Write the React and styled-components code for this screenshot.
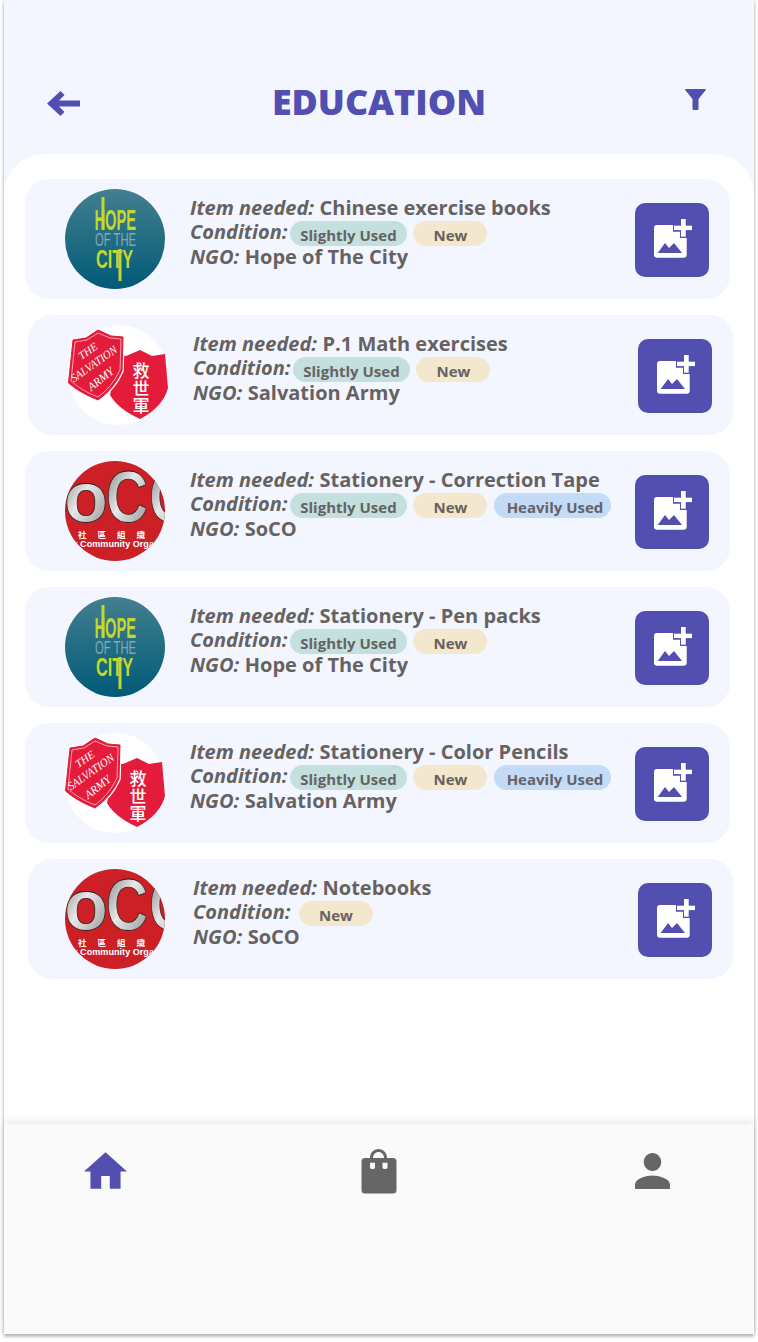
import React, { useId } from "react";
import styled, { createGlobalStyle } from "styled-components";

const Global = createGlobalStyle`
  html, body { margin: 0; padding: 0; background: #fff; }
  body { font-family: "Open Sans", "Liberation Sans", sans-serif; padding-bottom: 8px; }
`;

const Frame = styled.div`
  width: 750px;
  height: 1334px;
  margin-left: 4px;
  display: flex;
  flex-direction: column;
  background: #f3f6fe;
  box-shadow: 0 0 4px rgba(0, 0, 0, 0.22), 0 3px 3px rgba(0, 0, 0, 0.2);
`;

const Header = styled.header`
  height: 154px;
  flex: none;
  box-sizing: border-box;
  padding: 80px 43px 0 43px;
  display: grid;
  grid-template-columns: 1fr auto 1fr;
  align-items: start;
`;

const BackIcon = styled.svg`
  width: 33px;
  height: 25px;
  margin-top: 11px;
  color: #524fb0;
`;

const FilterIcon = styled.svg`
  width: 21px;
  height: 21px;
  margin: 9px 5px 0 0;
  justify-self: end;
  color: #524fb0;
`;

const Title = styled.h1`
  margin: -1px 0 0;
  font-size: 35.8px;
  line-height: 44px;
  font-weight: 800;
  color: #524fb0;
  letter-spacing: 0;
`;

const Sheet = styled.main`
  flex: 1;
  background: #fff;
  border-radius: 40px 40px 0 0;
  padding: 25px 21px 0;
  display: flex;
  flex-direction: column;
  gap: 16px;
`;

const Card = styled.article`
  width: 705px;
  height: 120px;
  flex: none;
  margin-left: ${(p) => (p.$shifted ? "3px" : "0")};
  box-sizing: border-box;
  padding: 10px 21px 10px 40px;
  display: flex;
  align-items: center;
  background: #f3f6fe;
  border-radius: 24px;
`;

const LogoSvg = styled.svg`
  width: 100px;
  height: 100px;
  flex: none;
  display: block;
`;

const LogoSlot = styled.div`
  flex: none;
  display: flex;
  margin-left: ${(p) => (p.$pulled ? "-3px" : "0")};
  margin-right: ${(p) => (p.$pulled ? "3px" : "0")};
`;

const Info = styled.div`
  flex: 1;
  min-width: 0;
  margin-left: 25px;
  align-self: flex-start;
  padding-top: 7px;
  font-size: 20px;
  line-height: 24.5px;
  font-weight: 700;
  color: #666262;
  white-space: nowrap;
`;

const Line = styled.div`
  display: flex;
  align-items: center;
  height: 24.5px;
`;

const ConditionLine = styled(Line)`
  margin-top: -1px;
  margin-bottom: 1px;
`;

const Label = styled.em`
  font-style: italic;
  font-weight: 700;
  margin-right: 5.5px;
`;

const Pills = styled.div`
  display: flex;
  gap: 6.5px;
  margin-left: ${(p) => (p.$wide ? "3px" : "-3px")};
  margin-top: 4px;
`;

const tones = { slight: "#c3e0df", fresh: "#f3e7cd", heavy: "#c3dbf7" };

const Pill = styled.span`
  display: flex;
  align-items: center;
  justify-content: center;
  height: 25px;
  width: ${(p) => (p.$tone === "fresh" ? "74px" : "117px")};
  border-radius: 13px;
  background: ${(p) => tones[p.$tone]};
  font-size: 15px;
  font-weight: 700;
  color: #666262;
  padding-top: 2px;
  padding-left: ${(p) => (p.$tone === "heavy" ? "5px" : "0")};
  box-sizing: border-box;
`;

const AddButton = styled.button`
  width: 74px;
  height: 74px;
  flex: none;
  border: 0;
  padding: 0;
  margin-top: 2px;
  border-radius: 10px;
  background: #524fb0;
  display: flex;
  align-items: center;
  justify-content: center;
`;

const AddIcon = styled.svg`
  width: 40px;
  height: 40px;
  margin-left: 2px;
  margin-bottom: 2px;
`;

const Nav = styled.nav`
  height: 210px;
  flex: none;
  box-sizing: border-box;
  padding: 25px 84px 0 80px;
  background: #fafafa;
  box-shadow: 0 -3px 10px rgba(0, 0, 0, 0.09);
  display: flex;
  justify-content: space-between;
  align-items: flex-start;
  position: relative;
`;

const HomeIcon = styled.svg`
  width: 43px;
  height: 37px;
  margin-top: 3px;
  color: #524fb0;
`;

const BagIcon = styled.svg`
  width: 36px;
  height: 45px;
  margin-right: 4px;
  color: #666;
`;

const PersonIcon = styled.svg`
  width: 35px;
  height: 36px;
  margin-top: 4px;
  color: #666;
`;

function HopeLogo() {
  const id = useId();
  return (
    <LogoSvg viewBox="0 0 100 100" aria-label="Hope of The City">
      <defs>
        <linearGradient id={id} x1="0" y1="0" x2="0" y2="1">
          <stop offset="0" stopColor="#437f90" />
          <stop offset="1" stopColor="#005a76" />
        </linearGradient>
      </defs>
      <circle cx="50" cy="50" r="50" fill={`url(#${id})`} />
      <rect x="36.5" y="8" width="3" height="33" fill="#c5d62e" />
      <text x="29.5" y="41" fontFamily="Liberation Sans, sans-serif" fontSize="29" fontWeight="700" fill="#c5d62e" textLength="41.5" lengthAdjust="spacingAndGlyphs">HOPE</text>
      <text x="30" y="57" fontFamily="Liberation Sans, sans-serif" fontSize="19" fill="#86a9b5" textLength="41" lengthAdjust="spacingAndGlyphs">OF THE</text>
      <text x="31" y="79" fontFamily="Liberation Sans, sans-serif" fontSize="26" fontWeight="700" fill="#c5d62e" textLength="37" lengthAdjust="spacingAndGlyphs">CITY</text>
      <rect x="53.5" y="60" width="3" height="32" fill="#c5d62e" />
    </LogoSvg>
  );
}

function SalvationLogo() {
  const shield = "M0.5 58 L5 15 L18 13 L30 5 L43 11 L55 12 L54 46 Q46 64 30 75 Q12 68 0.5 58 Z";
  return (
    <LogoSvg viewBox="0 0 100 100" aria-label="The Salvation Army">
      <circle cx="50" cy="50" r="50" fill="#fff" />
      <path d="M50 30 L58 31 L72 25 L84 31 L97 29 L100 63 Q95 82 72 94 Q50 84 42 70 Z" fill="#e41b3a" />
      <path d={shield} fill="#fff" stroke="#fff" strokeWidth="3.5" />
      <path d={shield} fill="#e41b3a" stroke="#e41b3a" strokeWidth="1" />
      <path d="M3 56 L7 17 L19 15 L30 8 L42 13 L53 14 L52 45 Q44 62 30 72 Q14 66 3 56 Z" fill="none" stroke="#fff" strokeWidth="0.6" />
      <g fontFamily="Liberation Serif, serif" fontStyle="italic" fill="#fff" textAnchor="middle">
        <text transform="translate(22 29) rotate(-35)" fontSize="11">THE</text>
        <text transform="translate(28 42) rotate(-35)" fontSize="11.5" textLength="54" lengthAdjust="spacingAndGlyphs">SALVATION</text>
        <text transform="translate(35 57) rotate(-38)" fontSize="11.5">ARMY</text>
      </g>
      <g fontFamily="Noto Sans CJK TC, sans-serif" fontWeight="500" fill="#fff" textAnchor="middle" fontSize="17">
        <text x="73" y="52">救</text>
        <text x="73" y="70">世</text>
        <text x="73" y="87">軍</text>
      </g>
    </LogoSvg>
  );
}

function SocoLogo() {
  const clip = useId();
  const grad = useId();
  return (
    <LogoSvg viewBox="0 0 100 100" aria-label="SoCO">
      <defs>
        <clipPath id={clip}>
          <circle cx="50" cy="50" r="50" />
        </clipPath>
        <linearGradient id={grad} x1="0" y1="0" x2="1" y2="1">
          <stop offset="0" stopColor="#6f6f6f" />
          <stop offset="0.45" stopColor="#e8e8e8" />
          <stop offset="1" stopColor="#8a8a8a" />
        </linearGradient>
      </defs>
      <circle cx="50" cy="50" r="50" fill="#cc1f26" />
      <g clipPath={`url(#${clip})`}>
        <g fontFamily="Liberation Sans, sans-serif" fontWeight="700" fontSize="72" fill={`url(#${grad})`} stroke="#2a2022" strokeWidth="0.8">
          <text x="-1" y="61">o</text>
          <text x="41" y="61" textLength="42" lengthAdjust="spacingAndGlyphs">C</text>
          <text x="84" y="61" textLength="42" lengthAdjust="spacingAndGlyphs">C</text>
        </g>
        <text x="13" y="77" fontFamily="Noto Sans CJK TC, sans-serif" fontSize="8.5" fontWeight="700" fill="#fff" letterSpacing="11">社區組織</text>
        <text x="9" y="85.5" fontFamily="Liberation Sans, sans-serif" fontSize="9" fontWeight="700" fill="#fff" textLength="80" lengthAdjust="spacingAndGlyphs">r Community Orga</text>
      </g>
    </LogoSvg>
  );
}

const logos = { hope: HopeLogo, salvation: SalvationLogo, soco: SocoLogo };

const items = [
  { item: "Chinese exercise books", ngo: "Hope of The City", logo: "hope", pills: ["slight", "fresh"] },
  { item: "P.1 Math exercises", ngo: "Salvation Army", logo: "salvation", pills: ["slight", "fresh"], shifted: true },
  { item: "Stationery - Correction Tape", ngo: "SoCO", logo: "soco", pills: ["slight", "fresh", "heavy"] },
  { item: "Stationery - Pen packs", ngo: "Hope of The City", logo: "hope", pills: ["slight", "fresh"] },
  { item: "Stationery - Color Pencils", ngo: "Salvation Army", logo: "salvation", pills: ["slight", "fresh", "heavy"] },
  { item: "Notebooks", ngo: "SoCO", logo: "soco", pills: ["fresh"], shifted: true, pulled: true },
];

const pillText = { slight: "Slightly Used", fresh: "New", heavy: "Heavily Used" };

function ItemCard({ item, ngo, logo, pills, shifted, pulled }) {
  const Logo = logos[logo];
  return (
    <Card $shifted={shifted}>
      <LogoSlot $pulled={pulled}><Logo /></LogoSlot>
      <Info>
        <Line><Label>Item needed:</Label>{item}</Line>
        <ConditionLine>
          <Label>Condition:</Label>
          <Pills $wide={pills.length === 1}>
            {pills.map((p) => <Pill key={p} $tone={p}>{pillText[p]}</Pill>)}
          </Pills>
        </ConditionLine>
        <Line><Label>NGO:</Label>{ngo}</Line>
      </Info>
      <AddButton aria-label="Add photo">
        <AddIcon viewBox="0 0 40 40">
          <path d="M4 6 H20 V12.7 H27 V19 H33.7 V35.7 Q33.7 38.7 30.7 38.7 H4 Q1 38.7 1 35.7 V9 Q1 6 4 6 Z" fill="#fff" />
          <path d="M4.7 34 L12 24 L16 29 L21 24 L29 34 Z" fill="#524fb0" />
          <rect x="28" y="0" width="4.7" height="17.7" fill="#fff" />
          <rect x="21" y="6.7" width="18" height="4.4" fill="#fff" />
        </AddIcon>
      </AddButton>
    </Card>
  );
}

export default function App() {
  return (
    <>
      <Global />
      <Frame>
        <Header>
          <BackIcon viewBox="0 0 33 25">
            <path d="M33 9.5 H12 L17.5 4 L13.5 0 L0 12.5 L13.5 25 L17.5 21 L12 15.5 H33 Z" fill="currentColor" />
          </BackIcon>
          <Title>EDUCATION</Title>
          <FilterIcon viewBox="0 0 21 21">
            <path d="M0.8 0 H20.2 Q21.4 0 20.6 1.2 L13.5 10 V20 Q13.5 21 12.5 21 H8.5 Q7.5 21 7.5 20 V10 L0.4 1.2 Q-0.4 0 0.8 0 Z" fill="currentColor" />
          </FilterIcon>
        </Header>
        <Sheet>
          {items.map((it) => <ItemCard key={it.item} {...it} />)}
        </Sheet>
        <Nav>
          <HomeIcon viewBox="2 3 20 17">
            <path d="M10 20v-6h4v6h5v-8h3L12 3 2 12h3v8z" fill="currentColor" />
          </HomeIcon>
          <BagIcon viewBox="0 0 36 45">
            <path fillRule="evenodd" fill="currentColor" d="M9 9 C9 3.5 13 0 17.5 0 S26 3.5 26 9 H32 Q35.5 9 35.5 12.5 V41 Q35.5 44.5 32 44.5 H4 Q0.5 44.5 0.5 41 V12.5 Q0.5 9 4 9 Z M12 9 H23 C23 5.5 20.5 3 17.5 3 S12 5.5 12 9 Z M9 13.7 V18.5 Q9 20 11.5 20 T14 18.5 V13.7 Z M21.5 13.7 V18.5 Q21.5 20 24 20 T26.5 18.5 V13.7 Z" />
          </BagIcon>
          <PersonIcon viewBox="4 4 16 16" preserveAspectRatio="none">
            <path d="M12 12c2.21 0 4-1.79 4-4s-1.79-4-4-4-4 1.79-4 4 1.79 4 4 4zm0 2c-2.67 0-8 1.34-8 4v2h16v-2c0-2.66-5.33-4-8-4z" fill="currentColor" />
          </PersonIcon>
        </Nav>
      </Frame>
    </>
  );
}
